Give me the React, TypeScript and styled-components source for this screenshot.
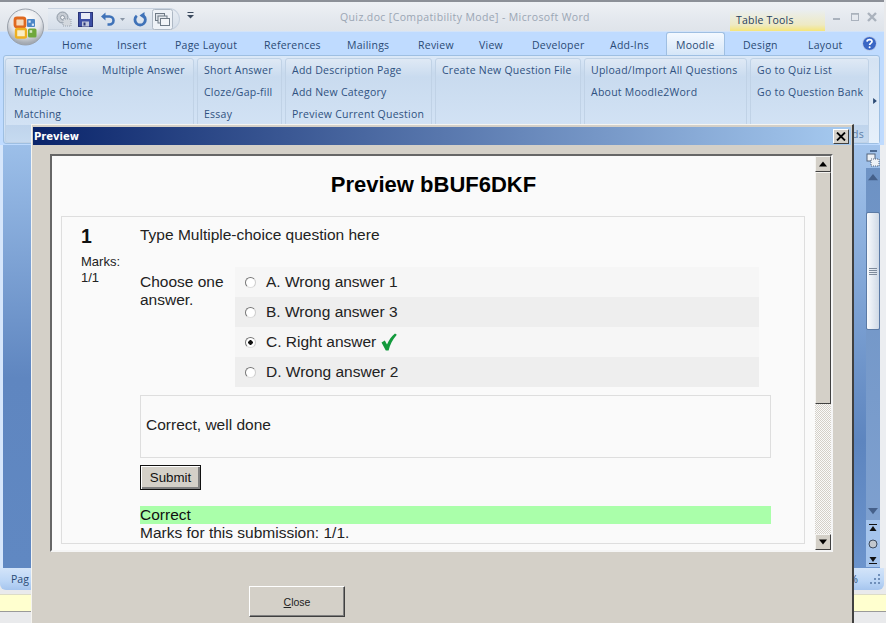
import React from 'react';
import styled, { createGlobalStyle } from 'styled-components';

const Global = createGlobalStyle`
  html, body { margin: 0; padding: 0; background: #e8e8e8; }
  * { box-sizing: border-box; }
`;

const Screen = styled.div`
  position: relative;
  width: 886px;
  height: 623px;
  overflow: hidden;
  display: flex;
  flex-direction: column;
  font-family: "Liberation Sans", Arial, sans-serif;
  background: #e9eaec;
`;

const TitleBar = styled.div`
  height: 31px;
  flex: none;
  margin-right: 2px;
  border-top: 2px solid #8c9098;
  background: linear-gradient(#eef1f5, #e4e8ee 60%, #dfe4ea);
  display: flex;
  align-items: flex-start;
  padding-left: 48px;
`;

const QuickBar = styled.div`
  width: 132px;
  height: 22px;
  margin-top: 6px;
  flex: none;
  border-radius: 0 12px 12px 0;
  background: linear-gradient(#e8edf3, #d5dee9);
  border: 1px solid #c8d2df;
  border-left: none;
  display: flex;
  align-items: center;
  padding-left: 8px;
`;

const IconSlot = styled.span<{ $ml?: number }>`
  display: flex;
  flex: none;
  margin-left: ${(p) => p.$ml ?? 0}px;
`;

const QuickMore = styled.div`
  width: 20px;
  margin: 10px 0 0 0;
  display: flex;
  justify-content: center;
  flex: none;
`;

const DocTitle = styled.div`
  width: 249px;
  margin: 8px 0 0 140px;
  flex: none;
  font-family: "Open Sans", sans-serif;
  font-size: 10.5px;
  letter-spacing: 0.38px;
  line-height: 14px;
  color: #9ba6b4;
  white-space: nowrap;
`;

const ContextTab = styled.div`
  width: 95px;
  height: 21px;
  margin: 8px 0 0 141px;
  flex: none;
  padding: 3px 0 0 6px;
  font-family: "Open Sans", sans-serif;
  font-size: 10.5px;
  letter-spacing: 0.2px;
  color: #27405f;
  background: linear-gradient(#eaeef0, #eeeac4 70%, #f5e57a);
`;

const WindowButtons = styled.div`
  margin: 9px 0 0 8px;
  display: flex;
  align-items: center;
`;

const TabRow = styled.div`
  height: 24px;
  flex: none;
  margin-right: 2px;
  background: #bfdbff;
  display: flex;
  padding-left: 62px;
  border-top: 1px solid #d3e3f8;
  position: relative;
`;

const Tab = styled.div<{ $w: number; $active?: boolean; $pl?: number }>`
  width: ${(p) => p.$w}px;
  flex: none;
  font-family: "Open Sans", sans-serif;
  font-size: 10.5px;
  letter-spacing: 0.25px;
  line-height: 14px;
  padding-top: 6px;
  padding-left: ${(p) => p.$pl ?? 0}px;
  color: #2a4a75;
  white-space: nowrap;
  ${(p) =>
    p.$active
      ? `
    margin-left: -10px;
    padding-left: 9px;
    border: 1px solid #9fbfe2;
    border-bottom: none;
    border-radius: 3px 3px 0 0;
    padding-top: 5px;
    background: linear-gradient(#f4f9ff, #d5e6f8);
  `
      : ''}
`;

const HelpSlot = styled.div`
  margin: 4px 0 0 6px;
`;

const RibbonOuter = styled.div`
  height: 90px;
  flex: none;
  margin-right: 2px;
  background: #bfdbff;
`;

const Ribbon = styled.div`
  height: 89px;
  margin: 0 4px 0 3px;
  padding: 2px 0 0 1px;
  display: flex;
  gap: 3px;
  border: 1px solid #9ebfe2;
  border-radius: 3px;
  background: linear-gradient(#dce9f8, #c8daee 20%, #d3e3f5 80%, #c2d8f0);
`;

const Group = styled.div<{ $w: number; $pl?: number }>`
  width: ${(p) => p.$w}px;
  height: 85px;
  flex: none;
  border: 1px solid #c0d2e6;
  border-radius: 3px;
  background: linear-gradient(#dfe9f5, #c9dbef 22%, #d2e2f4 80%, #bfd4ec 80%, #c6daf0);
  padding: 4px 0 0 ${(p) => p.$pl ?? 6}px;
  display: flex;
  position: relative;
`;

const GroupColumn = styled.div<{ $w?: number }>`
  width: ${(p) => (p.$w ? `${p.$w}px` : 'auto')};
  display: flex;
  flex-direction: column;
  gap: 8px;
`;

const RibbonItem = styled.div`
  height: 14px;
  font-family: "Open Sans", sans-serif;
  font-size: 10.5px;
  letter-spacing: 0.25px;
  line-height: 14px;
  color: #2f5180;
  white-space: nowrap;
`;

const GroupCaption = styled.div`
  position: absolute;
  right: 4px;
  bottom: 1px;
  font-family: "Open Sans", sans-serif;
  font-size: 10.5px;
  letter-spacing: 0.25px;
  line-height: 14px;
  color: #5d7ea8;
`;

const ChevronCol = styled.div`
  flex: 1;
  margin-left: -3px;
  display: flex;
  align-items: center;
  justify-content: center;
  background: linear-gradient(#d5e3f3, #e6f0fb);
  padding-left: 1px;
`;

const DocArea = styled.div`
  height: 423px;
  flex: none;
  display: flex;
  justify-content: space-between;
`;

const DocLeft = styled.div`
  width: 31px;
  border-left: 3px solid #d6e6fb;
  background: linear-gradient(#9cbfe9, #5f86c0 55%, #6088c2);
`;

const DocRight = styled.div`
  width: 33px;
  display: flex;
  padding-left: 13px;
  background: linear-gradient(#a3c4ec, #5d85bf 70%, #6b93cc);
`;

const WordScroll = styled.div`
  width: 14px;
  display: flex;
  flex-direction: column;
  align-items: center;
`;

const OuterStrip = styled.div`
  width: 6px;
  flex: none;
  background: #eceef1;
`;

const MinusBar = styled.div`
  width: 7px;
  height: 2px;
  margin-top: 5px;
  flex: none;
  background: #4d6c95;
`;

const SplitSlot = styled.div`
  height: 16px;
  flex: none;
  padding-top: 1px;
`;

const ScrollTrack = styled.div`
  width: 14px;
  height: 352px;
  flex: none;
  background: linear-gradient(#6d92c4, #7ea0cf);
  display: flex;
  flex-direction: column;
  align-items: center;
`;

const ScrollArrowSlot = styled.div`
  height: 18px;
  flex: none;
  display: flex;
  align-items: center;
`;

const WordThumb = styled.div`
  width: 14px;
  height: 118px;
  flex: none;
  margin-top: 26px;
  margin-bottom: auto;
  border: 1px solid #5b7aa5;
  border-radius: 2px;
  background: linear-gradient(90deg, #f8fafd, #cfd9e6);
  display: flex;
  align-items: center;
  justify-content: center;
`;

const BrowseBox = styled.div`
  width: 14px;
  height: 47px;
  flex: none;
  background: #a5c4ec;
  display: flex;
  flex-direction: column;
  align-items: center;
  justify-content: space-around;
`;

const StatusBar = styled.div`
  height: 22px;
  flex: none;
  margin-right: 2px;
  background: linear-gradient(#d3e4f9, #bcd6f6 60%, #a6c5ee);
  border-radius: 0 0 6px 6px;
  padding: 0 3px 0 11px;
  display: flex;
  justify-content: space-between;
  align-items: center;
  font-family: "Open Sans", sans-serif;
  font-size: 10.5px;
  color: #2a4a75;
`;

const StatusRight = styled.div`
  display: flex;
  align-items: center;
  gap: 12px;
`;

const Taskband = styled.div`
  height: 18px;
  margin-top: 4px;
  flex: none;
  background: #ffffcf;
  border-top: 1px solid #dcdcc8;
  border-bottom: 1px solid #9a9a9a;
`;

/* Floating dialog window */
const Dialog = styled.div`
  position: absolute;
  left: 31px;
  top: 124px;
  width: 823px;
  height: 499px;
  background: #d4d0c8;
  border-top: 1px solid #f5f4f0;
  border-left: 1px solid #f5f4f0;
  border-right: 2px solid #404040;
  padding: 2px 1px 0 1px;
  display: flex;
  flex-direction: column;
`;

const DialogTitle = styled.div`
  height: 18px;
  flex: none;
  background: linear-gradient(90deg, #0a246a, #a6caf0);
  padding: 0 2px 0 1px;
  display: flex;
  align-items: center;
  justify-content: space-between;
  color: #fff;
  font-family: "DejaVu Sans", sans-serif;
  font-weight: bold;
  font-size: 10px;
`;

const CloseX = styled.div`
  width: 16px;
  height: 15px;
  background: #d4d0c8;
  border: 1px solid;
  border-color: #fff #404040 #404040 #fff;
  display: flex;
  align-items: center;
  justify-content: center;
`;

const WebPanel = styled.div`
  width: 783px;
  height: 398px;
  flex: none;
  margin: 9px 0 0 17px;
  border: 2px solid;
  border-color: #666 #f5f5f5 #f5f5f5 #666;
  background: #fafafa;
  display: flex;
  overflow: hidden;
`;

const PageContent = styled.div`
  width: 763px;
  flex: none;
  height: 100%;
  overflow: hidden;
  padding: 0 9px;
`;

const PageHeading = styled.h1`
  margin: 0;
  height: 60px;
  padding-top: 17px;
  text-align: center;
  font-size: 22px;
  line-height: 24px;
  font-weight: bold;
  color: #000;
`;

const QuestionCard = styled.div`
  width: 744px;
  height: 328px;
  border: 1px solid #dedede;
  display: flex;
`;

const InfoCol = styled.div`
  width: 78px;
  flex: none;
  padding: 8px 0 0 19px;
  color: #222;
`;

const QuestionNo = styled.div`
  font-size: 19.5px;
  line-height: 22px;
  font-weight: bold;
  color: #111;
`;

const MarksText = styled.div`
  margin-top: 7px;
  font-size: 13px;
  line-height: 15.5px;
`;

const BodyCol = styled.div`
  width: 631px;
  flex: none;
  padding-top: 9px;
  color: #222;
  font-size: 15.5px;
  line-height: 18px;
`;

const QuestionText = styled.div`
  height: 41px;
`;

const ChoiceBlock = styled.div`
  display: flex;
`;

const ChoiceLabel = styled.div`
  width: 95px;
  flex: none;
  padding-top: 6px;
`;

const Answers = styled.div`
  width: 524px;
  flex: none;
`;

const AnswerRow = styled.div<{ $shade?: boolean }>`
  height: 30px;
  background: ${(p) => (p.$shade ? '#eeeeee' : '#f6f6f6')};
  display: flex;
  align-items: center;
  padding-left: 10px;
`;

const Radio = styled.span<{ $on?: boolean }>`
  width: 11px;
  height: 11px;
  flex: none;
  border-radius: 50%;
  background: ${(p) => (p.$on ? 'radial-gradient(circle, #111 0 2px, #fff 2.5px)' : '#fff')};
  border: 1px solid;
  border-color: #777 #ccc #ddd #777;
  margin-right: 10px;
`;

const CheckMark = styled.svg`
  margin-left: 5px;
  flex: none;
`;

const FeedbackBox = styled.div`
  width: 631px;
  height: 63px;
  margin-top: 8px;
  border: 1px solid #dedede;
  padding: 20px 0 0 5px;
`;

const SubmitButton = styled.button`
  display: block;
  width: 61px;
  height: 25px;
  margin-top: 7px;
  padding: 0;
  background: #d4d0c8;
  color: #111;
  border: 1px solid #111;
  box-shadow: inset 1px 1px 0 #fff, inset -2px -2px 0 #808080;
  font-family: "Liberation Sans", Arial, sans-serif;
  font-size: 13.3px;
`;

const CorrectBar = styled.div`
  height: 18px;
  margin-top: 16px;
  background: #aaffaa;
  color: #111;
`;

const MarksLine = styled.div`
  color: #222;
`;

const PageScroll = styled.div`
  width: 16px;
  flex: none;
  display: flex;
  flex-direction: column;
  background-color: #f2f1ee;
  background-image: repeating-conic-gradient(#d4d0c8 0 25%, #fafafa 0 50%);
  background-size: 2px 2px;
`;

const PageScrollBtn = styled.div`
  width: 16px;
  height: 16px;
  flex: none;
  background: #d4d0c8;
  border: 1px solid;
  border-color: #f4f3f0 #404040 #404040 #f4f3f0;
  display: flex;
  align-items: center;
  justify-content: center;
`;

const PageThumb = styled.div`
  width: 16px;
  height: 232px;
  flex: none;
  background: #d4d0c8;
  border: 1px solid;
  border-color: #f4f3f0 #404040 #404040 #f4f3f0;
  margin-bottom: auto;
`;

const DialogFooter = styled.div`
  display: flex;
  padding: 34px 0 0 216px;
`;

const CloseButton = styled.button`
  width: 96px;
  height: 31px;
  padding: 0;
  background: #d4d0c8;
  color: #222;
  border: 1px solid;
  border-color: #fff #404040 #404040 #fff;
  box-shadow: inset -1px -1px 0 #808080;
  font-family: "Liberation Sans", Arial, sans-serif;
  font-size: 10.5px;
`;

const Tri = ({ dir, color = '#000', size = 7 }: { dir: 'up' | 'down' | 'right'; color?: string; size?: number }) => (
  <svg width={size} height={size} viewBox="0 0 8 8">
    {dir === 'up' && <path d="M4 1.5 L8 6.5 H0 Z" fill={color} />}
    {dir === 'down' && <path d="M0 1.5 H8 L4 6.5 Z" fill={color} />}
    {dir === 'right' && <path d="M1.5 0 L6.5 4 L1.5 8 Z" fill={color} />}
  </svg>
);

const OfficeButton = styled.svg`
  position: absolute;
  left: 6px;
  top: 7px;
`;

const OfficeLogo = () => (
  <OfficeButton width="39" height="40" viewBox="0 0 39 40">
    <defs>
      <radialGradient id="orb" cx="50%" cy="30%" r="65%">
        <stop offset="0" stopColor="#ffffff" />
        <stop offset="0.65" stopColor="#e4e6ea" />
        <stop offset="1" stopColor="#a4aab2" />
      </radialGradient>
    </defs>
    <circle cx="19.5" cy="20" r="18" fill="url(#orb)" stroke="#9aa1ab" />
    <rect x="9" y="11" width="10" height="9" rx="2" fill="#f6d9b8" stroke="#e0691f" strokeWidth="2.8" />
    <rect x="21" y="12" width="8" height="8" rx="1" fill="#4c86c6" />
    <rect x="22.5" y="13.5" width="2.2" height="2.2" fill="#d8e7f6" />
    <rect x="25.8" y="16.6" width="2.2" height="2.2" fill="#d8e7f6" />
    <rect x="10" y="22" width="10" height="8.5" rx="1.5" fill="#fbeec4" stroke="#efb020" strokeWidth="2.4" />
    <rect x="22" y="21.5" width="8.5" height="9" rx="1.5" fill="#6fa83c" />
    <rect x="23.6" y="23.2" width="2.6" height="2.6" fill="#d5e8c0" />
  </OfficeButton>
);

const QuickIcons = () => (
  <>
    <IconSlot>
      <svg width="16" height="16" viewBox="0 0 16 16">
        <circle cx="6.5" cy="6.5" r="5.5" fill="#c6ccd4" stroke="#8e98a4" />
        <circle cx="6.5" cy="6.5" r="2" fill="#eef1f5" stroke="#8e98a4" />
        <rect x="7" y="8" width="8" height="7" fill="#d3d8de" stroke="#9aa4b0" strokeDasharray="1 1" />
      </svg>
    </IconSlot>
    <IconSlot $ml={6}>
      <svg width="15" height="15" viewBox="0 0 15 15">
        <rect x="0.5" y="0.5" width="14" height="14" fill="#3d4fa5" stroke="#2a3578" />
        <rect x="3" y="1" width="9" height="6" fill="#e9ecf6" />
        <rect x="4" y="9.5" width="7" height="5" fill="#bfc6dc" />
        <rect x="5.5" y="10.5" width="2" height="3" fill="#2a3578" />
      </svg>
    </IconSlot>
    <IconSlot $ml={8}>
      <svg width="14" height="15" viewBox="0 0 14 15" fill="none">
        <path d="M3 4.5 H8.5 A3.8 3.8 0 0 1 8.5 12.5 H6.5" stroke="#3f72b8" strokeWidth="2.6" />
        <path d="M0 4.5 L4.5 0.5 V8.5 Z" fill="#3f72b8" />
      </svg>
    </IconSlot>
    <IconSlot $ml={5}>
      <Tri dir="down" color="#8a96a6" size={5} />
    </IconSlot>
    <IconSlot $ml={8}>
      <svg width="14" height="15" viewBox="0 0 14 15" fill="none">
        <path d="M3.8 3.8 A5.2 5.2 0 1 0 10.5 3.8" stroke="#3f72b8" strokeWidth="2.8" />
        <path d="M11.5 0 V7 L6.5 3.5 Z" fill="#3f72b8" />
      </svg>
    </IconSlot>
    <IconSlot $ml={5}>
      <svg width="21" height="21" viewBox="0 0 21 21" fill="none">
        <rect x="0.5" y="0.5" width="20" height="20" rx="2" fill="#eef2f7" stroke="#aeb8c4" />
        <rect x="3.5" y="4.5" width="9" height="7" fill="#dfe4ea" stroke="#6f7a86" />
        <rect x="6" y="7" width="9" height="7" fill="#e6eaef" stroke="#6f7a86" />
        <rect x="8.5" y="9.5" width="9" height="7" fill="#f2f4f7" stroke="#6f7a86" />
      </svg>
    </IconSlot>
  </>
);

const tabs: [string, number][] = [
  ['Home', 55],
  ['Insert', 58],
  ['Page Layout', 89],
  ['References', 83],
  ['Mailings', 71],
  ['Review', 61],
  ['View', 53],
  ['Developer', 78],
  ['Add-Ins', 66],
];

export default function App() {
  return (
    <Screen>
      <Global />
      <TitleBar>
        <QuickBar>
          <QuickIcons />
        </QuickBar>
        <QuickMore>
          <svg width="7" height="7" viewBox="0 0 7 7">
            <rect x="0.5" y="0" width="6" height="1" fill="#3c4a5e" />
            <path d="M0 3 H7 L3.5 6.5 Z" fill="#3c4a5e" />
          </svg>
        </QuickMore>
        <DocTitle>Quiz.doc [Compatibility Mode] - Microsoft Word</DocTitle>
        <ContextTab>Table Tools</ContextTab>
        <WindowButtons>
          <svg width="44" height="12" viewBox="0 0 44 12" fill="none" stroke="#aab2bd">
            <path d="M0 8 H7" strokeWidth="2" />
            <rect x="18.5" y="2.5" width="7" height="7" />
            <path d="M18 3 H26" strokeWidth="1.5" />
            <path d="M35 2 L43 10 M43 2 L35 10" strokeWidth="2.4" />
          </svg>
        </WindowButtons>
      </TitleBar>
      <TabRow>
        {tabs.map(([t, w]) => (
          <Tab key={t} $w={w}>
            {t}
          </Tab>
        ))}
        <Tab $w={59} $active>
          Moodle
        </Tab>
        <Tab $w={75} $pl={18}>
          Design
        </Tab>
        <Tab $w={56} $pl={8}>
          Layout
        </Tab>
        <HelpSlot>
          <svg width="15" height="15" viewBox="0 0 15 15">
            <circle cx="7.5" cy="7.5" r="7" fill="#3a66c4" stroke="#c9d6ee" />
            <path d="M5 5.6 C5.2 2.9 10 2.9 10 5.4 C10 7.2 7.7 7 7.6 9" fill="none" stroke="#fff" strokeWidth="1.7" />
            <circle cx="7.6" cy="11.2" r="1" fill="#fff" />
          </svg>
        </HelpSlot>
      </TabRow>
      <RibbonOuter>
        <Ribbon>
          <Group $w={189} $pl={8}>
            <GroupColumn $w={88}>
              <RibbonItem>True/False</RibbonItem>
              <RibbonItem>Multiple Choice</RibbonItem>
              <RibbonItem>Matching</RibbonItem>
            </GroupColumn>
            <GroupColumn>
              <RibbonItem>Multiple Answer</RibbonItem>
            </GroupColumn>
          </Group>
          <Group $w={85}>
            <GroupColumn>
              <RibbonItem>Short Answer</RibbonItem>
              <RibbonItem>Cloze/Gap-fill</RibbonItem>
              <RibbonItem>Essay</RibbonItem>
            </GroupColumn>
          </Group>
          <Group $w={147}>
            <GroupColumn>
              <RibbonItem>Add Description Page</RibbonItem>
              <RibbonItem>Add New Category</RibbonItem>
              <RibbonItem>Preview Current Question</RibbonItem>
            </GroupColumn>
          </Group>
          <Group $w={146}>
            <GroupColumn>
              <RibbonItem>Create New Question File</RibbonItem>
            </GroupColumn>
          </Group>
          <Group $w={163}>
            <GroupColumn>
              <RibbonItem>Upload/Import All Questions</RibbonItem>
              <RibbonItem>About Moodle2Word</RibbonItem>
            </GroupColumn>
          </Group>
          <Group $w={119}>
            <GroupColumn>
              <RibbonItem>Go to Quiz List</RibbonItem>
              <RibbonItem>Go to Question Bank</RibbonItem>
            </GroupColumn>
            <GroupCaption>Commands</GroupCaption>
          </Group>
          <ChevronCol>
            <Tri dir="right" color="#2c4a74" size={6} />
          </ChevronCol>
        </Ribbon>
      </RibbonOuter>
      <DocArea>
        <DocLeft />
        <DocRight>
          <WordScroll>
            <MinusBar />
            <SplitSlot>
              <svg width="14" height="14" viewBox="0 0 14 14">
                <rect x="1" y="1" width="8" height="7" fill="#eef2f7" stroke="#55657c" />
                <rect x="5" y="6" width="8" height="7" fill="#eef2f7" stroke="#55657c" strokeDasharray="1 1" />
              </svg>
            </SplitSlot>
            <ScrollTrack>
              <ScrollArrowSlot>
                <Tri dir="up" color="#45608a" size={10} />
              </ScrollArrowSlot>
              <WordThumb>
                <svg width="8" height="7" viewBox="0 0 8 7" stroke="#7d8a9b">
                  <path d="M0 .5 H8 M0 2.5 H8 M0 4.5 H8 M0 6.5 H8" />
                </svg>
              </WordThumb>
              <ScrollArrowSlot>
                <Tri dir="down" color="#45608a" size={10} />
              </ScrollArrowSlot>
            </ScrollTrack>
            <BrowseBox>
              <svg width="8" height="8" viewBox="0 0 8 8">
                <path d="M0 .5 H8" stroke="#111" />
                <path d="M4 2 L7.5 7 H.5 Z" fill="#111" />
              </svg>
              <svg width="10" height="10" viewBox="0 0 10 10">
                <circle cx="5" cy="5" r="4" fill="#c2c7cd" stroke="#3c4a5e" />
              </svg>
              <svg width="8" height="8" viewBox="0 0 8 8">
                <path d="M.5 1 H7.5 L4 6 Z" fill="#111" />
                <path d="M0 7.5 H8" stroke="#111" />
              </svg>
            </BrowseBox>
          </WordScroll>
          <OuterStrip />
        </DocRight>
      </DocArea>
      <StatusBar>
        <span>Pag</span>
        <StatusRight>
          <span>%</span>
          <svg width="11" height="11" viewBox="0 0 11 11" fill="#6f8fba">
            <rect x="8" y="0" width="2" height="2" />
            <rect x="4" y="4" width="2" height="2" />
            <rect x="8" y="4" width="2" height="2" />
            <rect x="0" y="8" width="2" height="2" />
            <rect x="4" y="8" width="2" height="2" />
            <rect x="8" y="8" width="2" height="2" />
          </svg>
        </StatusRight>
      </StatusBar>
      <Taskband />
      <OfficeLogo />
      <Dialog>
        <DialogTitle>
          <span>Preview</span>
          <CloseX>
            <svg width="10" height="9" viewBox="0 0 10 9" stroke="#000" strokeWidth="1.8">
              <path d="M1 0.5 L9 8.5 M9 0.5 L1 8.5" />
            </svg>
          </CloseX>
        </DialogTitle>
        <WebPanel>
          <PageContent>
            <PageHeading>Preview bBUF6DKF</PageHeading>
            <QuestionCard>
              <InfoCol>
                <QuestionNo>1</QuestionNo>
                <MarksText>
                  Marks:
                  <br />
                  1/1
                </MarksText>
              </InfoCol>
              <BodyCol>
                <QuestionText>Type Multiple-choice question here</QuestionText>
                <ChoiceBlock>
                  <ChoiceLabel>
                    Choose one
                    <br />
                    answer.
                  </ChoiceLabel>
                  <Answers>
                    <AnswerRow>
                      <Radio />
                      A. Wrong answer 1
                    </AnswerRow>
                    <AnswerRow $shade>
                      <Radio />
                      B. Wrong answer 3
                    </AnswerRow>
                    <AnswerRow>
                      <Radio $on />
                      C. Right answer
                      <CheckMark width="16" height="18" viewBox="0 0 16 18">
                        <path d="M0.5 9.5 L3.8 7.5 L6 11.5 C8 7 10.5 3 14 0.5 L15.8 1.8 C11.5 6.5 9 12 7.6 17.5 L4.8 17.5 Z" fill="#129a3c" />
                      </CheckMark>
                    </AnswerRow>
                    <AnswerRow $shade>
                      <Radio />
                      D. Wrong answer 2
                    </AnswerRow>
                  </Answers>
                </ChoiceBlock>
                <FeedbackBox>Correct, well done</FeedbackBox>
                <SubmitButton>Submit</SubmitButton>
                <CorrectBar>Correct</CorrectBar>
                <MarksLine>Marks for this submission: 1/1.</MarksLine>
              </BodyCol>
            </QuestionCard>
          </PageContent>
          <PageScroll>
            <PageScrollBtn>
              <Tri dir="up" size={8} />
            </PageScrollBtn>
            <PageThumb />
            <PageScrollBtn>
              <Tri dir="down" size={8} />
            </PageScrollBtn>
          </PageScroll>
        </WebPanel>
        <DialogFooter>
          <CloseButton>
            <u>C</u>lose
          </CloseButton>
        </DialogFooter>
      </Dialog>
    </Screen>
  );
}
